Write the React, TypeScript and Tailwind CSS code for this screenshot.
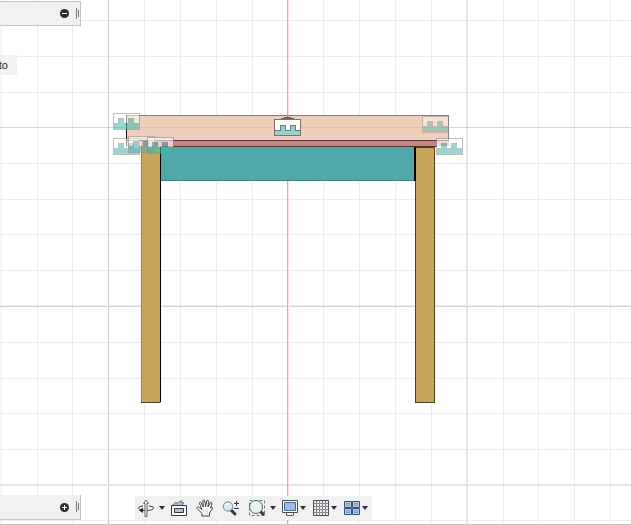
import React from "react";

const minorX = [37, 72, 144, 180, 216, 252, 323, 359, 395, 431, 503, 538, 574, 610];
const minorY = [20, 56, 92, 163, 199, 234, 270, 342, 378, 413, 449, 520];

function Joint({ x, y, o = 0.55 }: { x: number; y: number; o?: number }) {
  return (
    <g transform={`translate(${x} ${y})`} opacity={o}>
      <rect x="0.5" y="0.5" width="26" height="16" fill="#fff" stroke="#8a8a8a" />
      <path d="M1 11H6V6H11V11H16V6H21V11H26V16H1Z" fill="#43b5b2" />
      <path d="M1 10.5H5.5V5.5H10.5V10.5H15.5V5.5H20.5V10.5H26" fill="none" stroke="#6f9c9a" />
    </g>
  );
}

function Canvas() {
  return (
    <svg className="absolute inset-0 h-full w-full" shapeRendering="crispEdges" role="img" aria-label="Table front view">
      <rect width="2" height="100%" fill="#f5f5f5" />
      {minorX.map((x) => <rect key={x} x={x} y="0" width="1" height="100%" fill="#ececec" />)}
      {minorY.map((y) => <rect key={y} x="0" y={y} width="100%" height="1" fill="#ececec" />)}
      <rect x="108" width="1" height="100%" fill="#cbcbcb" />
      <rect x="466" width="2" height="100%" fill="#e6e6e6" />
      <rect y="305" width="100%" height="1" fill="#ececec" />
      <rect y="306" width="100%" height="1" fill="#d6d6d6" />
      <rect y="484" width="100%" height="2" fill="#e6e6e6" />
      <rect x="287" width="1" height="100%" fill="#f59f9f" />
      <rect x="288" width="1" height="100%" fill="#fde2e2" />

      <rect x="160" y="147" width="255" height="34" fill="#50a9a8" />
      <rect x="160" y="180" width="255" height="1" fill="#37807f" />
      <rect x="141" y="147" width="20" height="256" fill="#c7a65c" />
      <path d="M141.5 147V402" stroke="#8c8065" />
      <path d="M160.5 147V402" stroke="#000" />
      <path d="M141 402.5H160" stroke="#51431e" />
      <rect x="415.5" y="147.5" width="19" height="255" fill="#c7a65c" stroke="#51431e" />
      <rect x="414" y="147" width="2" height="34" fill="#000" />
      <rect x="126" y="115" width="323" height="26" fill="#edcfbb" />
      <path d="M126 115.5H448.5V140" fill="none" stroke="#8e7c70" />
      <path d="M126.5 115V146" stroke="#111" />
      <rect x="127" y="140" width="310" height="7" fill="#c78480" />
      <path d="M127 140.5H449M160 146.5H437" stroke="#543735" />
      <rect x="127" y="141" width="14" height="6" fill="#edcfcf" />
      <rect x="437" y="141" width="12" height="5" fill="#dcaaa9" />
      <rect y="127" width="100%" height="1" fill="#7fee70" fillOpacity="0.65" />
      <rect x="287" y="115" width="1" height="3" fill="#d87670" />
      <path d="M280 119L285 117H290L295 119Z" fill="#795d50" />
      <Joint x={113} y={113} />
      <Joint x={113} y={138} />
      <Joint x={128} y={136} o={0.5} />
      <Joint x={147} y={137} o={0.6} />
      <Joint x={422} y={116} o={0.4} />
      <Joint x={436} y={138} />
      <g>
        <rect x="274.5" y="119.5" width="26" height="16" fill="#fff" stroke="#7d716a" />
        <path d="M275 130H280V125H286V130H290V125H296V130H300V135H275Z" fill="#9fd0c9" />
        <path d="M275 130.5H280.5V125.5H285.5V130.5H290.5V125.5H295.5V130.5H300" fill="none" stroke="#627f7b" />
      </g>
    </svg>
  );
}

function Panel({ expand = false }: { expand?: boolean }) {
  return (
    <div className={`flex h-[25px] w-[81px] items-center justify-end border-r border-b border-[#c4c4c4] bg-[#f1f1f1] ${expand ? "" : "border-t"}`}>
      <button type="button" aria-label={expand ? "Expand" : "Collapse"} className="mr-[7px]">
        <svg className="block" width="9" height="9" viewBox="0 0 9 9">
          <circle cx="4.5" cy="4.5" r="4.5" fill="#2d2d2d" />
          <path d={expand ? "M2 4.5H7M4.5 2V7" : "M2 4.5H7"} stroke="#fff" />
        </svg>
      </button>
      <svg className="mr-px" width="3" height="12" viewBox="0 0 3 12" shapeRendering="crispEdges">
        <path d="M.5 0V11M2.5 2V9" stroke="#777" />
      </svg>
    </div>
  );
}

function Tool({ label, cls, children, menu = true }: { label: string; cls: string; children: React.ReactNode; menu?: boolean }) {
  return (
    <button type="button" aria-label={label} className={`flex items-center justify-between ${cls}`}>
      <svg width="18" height="18" viewBox="0 0 18 18" fill="none" stroke="#303841">{children}</svg>
      {menu && <svg width="6" height="4" viewBox="0 0 6 4"><path d="M0 0H6L3 4Z" fill="#303030" /></svg>}
    </button>
  );
}

export default function App() {
  return (
    <main className="relative min-h-screen overflow-hidden bg-white font-['Liberation_Sans',Arial,sans-serif] text-[11px] text-[#222]">
      <Canvas />
      <div className="relative flex min-h-screen flex-col items-start border-b border-[#c8c8c8] pt-px">
        <Panel />
        <span className="mt-[29px] flex h-5 w-[17px] items-center justify-end bg-[#f1f1f1] pr-[9px] leading-5">to</span>
        <div className="mt-auto mb-1 flex items-end gap-[54px]">
          <Panel expand />
          <nav aria-label="View tools" className="flex h-6 items-center bg-[#f1f1f1] pr-1 pl-[2px]">
            <Tool label="Orbit" cls="w-7">
              <path d="M6 7C3 7.3 1.500 8 1.500 9S4 11.500 9 11.500S16.500 10.500 16.500 9S14 7.300 12 7" />
              <path d="M8 17.500V4.500H6.500L9 1L11.500 4.500H10V17.500Z" fill="#fff" stroke="#59616a" />
              <path d="M6 8.500V14L2 11.500Z" fill="#20262d" stroke="none" />
            </Tool>
            <Tool label="Look at" cls="ml-[5px] w-[18px]" menu={false}>
              <path d="M2 6.500L6 3V4.500L12 1.500L11 3.500H14L12 6.500Z" fill="#b3babf" stroke="#78818a" />
              <path d="M1.500 6.500H16.500V16.500H1.500Z" fill="#fff" />
              <path d="M4.500 9.500H13.500V13.500H4.500Z" fill="#b5c3d3" />
            </Tool>
            <Tool label="Pan" cls="ml-[8px] w-[18px]" menu={false}>
              <path d="M6 17V14.500L1.200 9.500C.5 8 2 7.500 3.500 8.700L6 10.500L3.500 4.500C3 3 4.500 2.500 5.200 4L7.400 8L6.800 2C7 .7 8.500.7 8.800 2L9.500 7.500L10.800 2C11.200.7 12.700 1 12.500 2.500L12 8L14 4C14.800 2.700 16.200 3.400 15.800 5L14.500 9C16 8.500 17 8.500 16.500 9.500L13.500 14V17Z" fill="#fff" stroke="#39414a" strokeLinejoin="round" />
              <path d="M7 10L8 13M10 9V13M12 10L11 14M8 15H12" stroke="#d4d7dc" />
            </Tool>
            <Tool label="Zoom" cls="ml-[8px] w-[18px]" menu={false}>
              <path d="M9.500 11.500L13 15" strokeWidth="3" strokeLinecap="round" />
              <circle cx="6" cy="7.500" r="4.700" fill="#d4edf2" stroke="#7b858c" />
              <path d="M3.500 6.500Q4.500 4.500 7 5" stroke="#fff" strokeWidth="1.500" />
              <path d="M12 4.500H17M14.500 2V7M12 9.500H17" />
            </Tool>
            <Tool label="Fit" cls="ml-[8px] w-[28px]">
              <path d="M1.500 1.500H16.500V16.500H1.500Z" stroke="#777" strokeDasharray="3 2" />
              <path d="M12 12L16 16" strokeWidth="3" />
              <circle cx="8" cy="8" r="6.500" fill="#e5f3f3" stroke="#59636a" />
              <path d="M4 6Q5 4 8 4" stroke="#fff" strokeWidth="2" />
            </Tool>
            <Tool label="Display settings" cls="ml-[5px] w-[25px]">
              <path d="M5.500 14V16.500H12.500V14" fill="#eee" stroke="#59616a" />
              <path d="M1.500 1.500H16.500V13.500H1.500Z" fill="#fff" stroke="#454b52" />
              <path d="M3.500 3.500H14.500V11.500H3.500Z" fill="#9dbce4" stroke="#486b9a" />
            </Tool>
            <Tool label="Grid settings" cls="ml-[6px] w-[25px]">
              <path d="M1.500 1.500H16.500V16.500H1.500Z" fill="#e7e9eb" stroke="#4a5056" />
              <path d="M4.500 2V16M7.500 2V16M10.500 2V16M13.500 2V16M2 4.500H16M2 7.500H16M2 10.500H16M2 13.500H16" stroke="#858b91" />
            </Tool>
            <Tool label="Viewports" cls="ml-[6px] w-[25px]">
              <path d="M1.500 2.500H8.500V8.500H1.500ZM9.500 2.500H16.500V8.500H9.500ZM1.500 9.500H8.500V15.500H1.500ZM9.500 9.500H16.500V15.500H9.500Z" fill="#b3cdec" stroke="#38506f" />
              <path d="M3.500 4.500H6.500V6.500H3.500ZM11.500 4.500H14.500V6.500H11.500ZM3.500 11.500H6.500V13.500H3.500ZM11.500 11.500H14.500V13.500H11.500Z" stroke="#7798c2" />
            </Tool>
          </nav>
        </div>
      </div>
    </main>
  );
}
